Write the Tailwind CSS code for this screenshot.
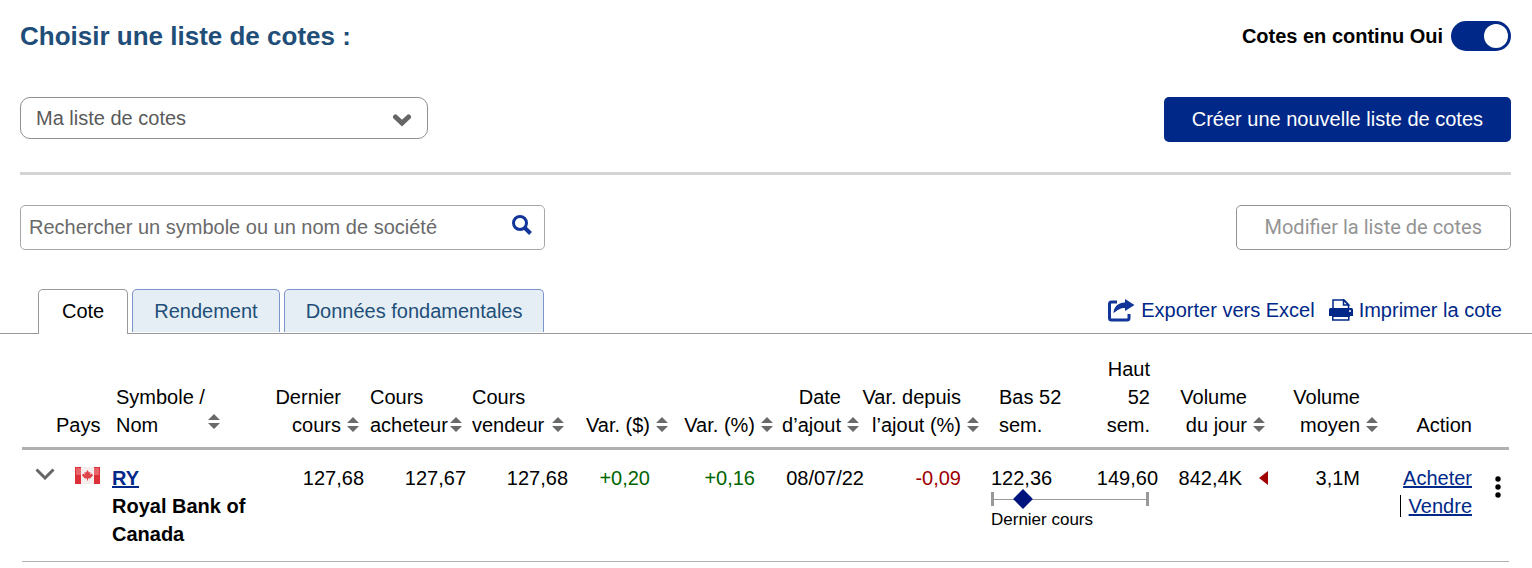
<!DOCTYPE html>
<html lang="fr">

<head>
    <meta charset="UTF-8">
    <meta name="viewport" content="width=device-width, initial-scale=1.0">
    <title>Listes de cotes</title>
    <script src="https://cdn.jsdelivr.net/npm/@tailwindcss/browser@4"></script>
</head>

<body class="bg-white text-black text-[20px] leading-7 font-['Liberation_Sans',Arial,sans-serif]">

    <!-- Sort arrows, shared by the column headers -->
    <svg class="hidden">
        <symbol id="sort" viewBox="0 0 12 15">
            <path d="M6 0l6 6H0zM6 15l6-6H0z" fill="#6a6a6a" />
        </symbol>
    </svg>

    <!-- List selection -->
    <header class="ml-5 mr-[21px] pt-[21px] pb-[30px] border-b-3 border-[#d3d3d3]">
        <div class="flex justify-between items-center h-[30px]">
            <h1 class="text-[26px] font-bold text-[#1f4e79]"><label for="liste">Choisir une liste de cotes :</label></h1>
            <label class="flex items-center gap-2 font-bold">
                Cotes en continu Oui
                <input type="checkbox" role="switch" checked class="peer sr-only">
                <span class="flex justify-end w-[60px] h-[30px] p-[3px] rounded-full bg-[#002888]">
                    <span class="w-6 h-6 rounded-full bg-white"></span>
                </span>
            </label>
        </div>
        <div class="flex justify-between items-start mt-[46px]">
            <div class="relative w-[408px]">
                <select id="liste" class="appearance-none w-full h-[42px] pl-[15px] rounded-[10px] border border-[#8f8f8f] bg-white text-[#5a5a5a]">
                    <option>Ma liste de cotes</option>
                </select>
                <svg class="absolute right-4 top-4 w-[20px] h-[14px] pointer-events-none" viewBox="0 0 20 14">
                    <path d="M3.500 4l6.500 6 6.500-6" fill="none" stroke="#666" stroke-width="5" stroke-linecap="round" />
                </svg>
            </div>
            <button type="button" class="h-[45px] px-7 pb-[2px] rounded-[5px] bg-[#002888] text-white">Créer une nouvelle liste de cotes</button>
        </div>
    </header>

    <!-- Search -->
    <div class="flex justify-between ml-5 mr-[21px] mt-[30px]">
        <div class="relative w-[525px]">
            <input type="text" aria-label="Rechercher" placeholder="Rechercher un symbole ou un nom de société" class="w-full h-[45px] pl-2 pr-12 rounded-[5px] border border-[#a8a8a8] placeholder:text-[#6a6a6a]">
            <button type="button" aria-label="Lancer la recherche" class="absolute right-[13px] top-[10px]">
                <svg class="w-5 h-5" viewBox="0 0 20 20" fill="none" stroke="#12359a">
                    <circle cx="8" cy="8" r="6.500" stroke-width="3" />
                    <path d="M13 13l5.500 5.500" stroke-width="4" />
                </svg>
            </button>
        </div>
        <button type="button" disabled class="h-[45px] px-7 pb-[2px] rounded-[5px] border border-[#949494] text-[#949494] font-[Roboto,sans-serif]">Modifier la liste de cotes</button>
    </div>

    <!-- Tabs and exports -->
    <div class="flex justify-between items-end mt-[39px] border-b border-[#999] pl-[38px] pr-[30px]">
        <div class="flex items-start gap-1" role="tablist">
            <button type="button" role="tab" aria-selected="true" class="h-[45px] -mb-px px-[23px] pb-[3px] rounded-t-[5px] border border-b-0 border-[#999] bg-white">Cote</button>
            <button type="button" role="tab" class="h-[43px] px-[21px] rounded-t-[5px] border border-b-0 border-[#7c93cb] bg-[#e5eef4] text-[#1f4e79]">Rendement</button>
            <button type="button" role="tab" class="h-[43px] px-[21px] rounded-t-[5px] border border-b-0 border-[#7c93cb] bg-[#e5eef4] text-[#1f4e79]">Données fondamentales</button>
        </div>
        <div class="flex gap-[14px] pb-[9px] text-[#002888]">
            <a href="#" class="flex items-center gap-[6px]">
                <svg class="w-7 h-6" viewBox="0 0 28 24">
                    <path d="M10 4H4.500Q2.500 4 2.500 6v14Q2.500 22 4.500 22H20q2 0 2-2v-4" fill="none" stroke="#12359a" stroke-width="3" />
                    <path d="M18 1l9.500 6L18 13v-3C13 10 11 12 6.500 15 7 9 10 5 18 4.500z" fill="#12359a" />
                </svg>
                Exporter vers Excel
            </a>
            <a href="#" class="flex items-center gap-[6px]">
                <svg class="w-6 h-[22px]" viewBox="0 0 24 22">
                    <path d="M4 10V1h11l4.500 4.500V10" fill="#fff" stroke="#002888" stroke-width="1.500" />
                    <path d="M14.500 1v5H19.500z" fill="#fff" stroke="#002888" stroke-width="1.500" />
                    <path d="M1.500 9h21q1.500 0 1.500 1.500V17H0v-6.500Q0 9 1.500 9z" fill="#002888" />
                    <circle cx="21" cy="12" r="1" fill="#fff" />
                    <path d="M3.750 16h16v5h-16z" fill="#fff" stroke="#002888" stroke-width="1.500" />
                    <path d="M3 14h18v4H3z" fill="#002888" />
                </svg>
                Imprimer la cote
            </a>
        </div>
    </div>

    <!-- Quotes -->
    <div class="ml-[22px] mr-[23px] mt-[21px]">
        <table class="w-full table-fixed">
            <colgroup>
                <col class="w-[34px]">
                <col class="w-[50px]">
                <col class="w-[150px]">
                <col class="w-[108px]">
                <col class="w-[102px]">
                <col class="w-[102px]">
                <col class="w-[100px]">
                <col class="w-[105px]">
                <col class="w-[91px]">
                <col class="w-[115px]">
                <col class="w-[91px]">
                <col class="w-[88px]">
                <col class="w-[112px]">
                <col class="w-[108px]">
                <col class="w-[102px]">
                <col class="w-[29px]">
            </colgroup>
            <thead>
                <tr class="border-b-3 border-[#b0b0b0] align-bottom [&>th]:font-normal [&>th]:pb-2 [&>th]:whitespace-nowrap [&_button]:flex [&_button]:items-end [&_button]:w-full [&_svg]:shrink-0 [&_svg]:w-3 [&_svg]:h-[15px] [&_svg]:mb-[7px]">
                    <th></th>
                    <th class="text-left">Pays</th>
                    <th><button type="button" class="justify-between text-left pl-[10px] pr-9"><span>Symbole /<br>Nom</span><span class="pb-[3px]"><svg><use href="#sort" /></svg></span></button></th>
                    <th><button type="button" class="justify-end gap-[6px] text-right pr-[5px]"><span>Dernier<br>cours</span><svg><use href="#sort" /></svg></button></th>
                    <th><button type="button" class="justify-between text-left pl-[6px] pr-1"><span>Cours<br>acheteur</span><svg><use href="#sort" /></svg></button></th>
                    <th><button type="button" class="justify-between text-left pl-[6px] pr-1"><span>Cours<br>vendeur</span><svg><use href="#sort" /></svg></button></th>
                    <th><button type="button" class="justify-end gap-[6px] text-right">Var. ($) <svg><use href="#sort" /></svg></button></th>
                    <th><button type="button" class="justify-end gap-[6px] text-right">Var. (%) <svg><use href="#sort" /></svg></button></th>
                    <th><button type="button" class="justify-end gap-[6px] text-right pr-[5px]"><span>Date<br>d’ajout</span><svg><use href="#sort" /></svg></button></th>
                    <th><button type="button" class="justify-end gap-[6px] text-right"><span>Var. depuis<br>l’ajout (%)</span><svg><use href="#sort" /></svg></button></th>
                    <th class="text-left pl-5">Bas 52<br>sem.</th>
                    <th class="text-right pr-2">Haut<br>52<br>sem.</th>
                    <th><button type="button" class="justify-end gap-[6px] text-right pr-[5px]"><span>Volume<br>du jour</span><svg><use href="#sort" /></svg></button></th>
                    <th><button type="button" class="justify-end gap-[6px] text-right"><span>Volume<br>moyen</span><svg><use href="#sort" /></svg></button></th>
                    <th class="text-right pr-2">Action</th>
                    <th></th>
                </tr>
            </thead>
            <tbody>
                <tr class="border-b border-[#b0b0b0] align-top [&>td]:pt-[14px] [&>td]:pb-[13px]">
                    <td class="pl-[13px]">
                        <button type="button" aria-label="Détails" class="block pt-1">
                            <svg class="w-5 h-3" viewBox="0 0 20 12"><path d="M1.500 1.500L10 10l8.500-8.500" fill="none" stroke="#666" stroke-width="3" /></svg>
                        </button>
                    </td>
                    <td>
                        <svg class="ml-[19px] mt-[3px] w-[25px] h-[17px]" viewBox="0 0 25 17" role="img" aria-label="Canada">
                            <path d="M0 0h25v17H0z" fill="#f6eeee" />
                            <path d="M0 0h6v17H0zM19 0h6v17h-6z" fill="#dc3038" />
                            <path d="M1 1h5v7H1zM19 1h5v7h-5z" fill="#e9646a" />
                            <path d="M12.500 3l1.500 2.500 1.500-.5-.3 2.500L17 6.500l1 2-3 3h-2v2h-1v-2h-2l-3-3 1-2 1.800 1L9.500 5l1.500.5z" fill="#e0454c" />
                        </svg>
                    </td>
                    <td class="pl-[6px] font-bold"><a href="#" class="text-[#002888] underline">RY</a><br>Royal Bank of Canada</td>
                    <td class="text-right">127,68</td>
                    <td class="text-right">127,67</td>
                    <td class="text-right">127,68</td>
                    <td class="text-right text-[#006400] pr-[18px]">+0,20</td>
                    <td class="text-right text-[#006400] pr-[18px]">+0,16</td>
                    <td class="text-right whitespace-nowrap">08/07/22</td>
                    <td class="text-right text-[#a00000] pr-[18px]">-0,09</td>
                    <td colspan="2" class="pl-3">
                        <div class="flex justify-between"><span>122,36</span><span>149,60</span></div>
                        <!-- 52-week range -->
                        <div class="relative flex items-center h-[14px] mr-[9px] border-x-3 border-[#999]">
                            <div class="w-full h-px bg-[#999]"></div>
                            <div class="absolute w-[14px] h-[14px] -ml-[7px] rotate-45 bg-[#00147d]" style="left: 19%"></div>
                        </div>
                        <div class="text-[17px]">Dernier cours</div>
                    </td>
                    <td>
                        <div class="flex justify-end items-center gap-[17px] pr-[2px]">
                            842,4K
                            <svg class="w-[9px] h-[14px]" viewBox="0 0 9 14"><path d="M0 7l9-7v14z" fill="#a00000" /></svg>
                        </div>
                    </td>
                    <td class="text-right pr-[18px]">3,1M</td>
                    <td class="text-right pr-2">
                        <a href="#" class="text-[#002888] underline">Acheter</a>
                        <div class="flex justify-end items-center gap-2">
                            <span class="w-px h-[22px] bg-black"></span>
                            <a href="#" class="text-[#002888] underline">Vendre</a>
                        </div>
                    </td>
                    <td>
                        <button type="button" aria-label="Plus d’options" class="block pl-[15px] pt-3">
                            <svg class="w-[6px] h-[22px]" viewBox="0 0 6 22"><circle cx="3" cy="3" r="2.700" /><circle cx="3" cy="11" r="2.700" /><circle cx="3" cy="19" r="2.700" /></svg>
                        </button>
                    </td>
                </tr>
            </tbody>
        </table>
    </div>

</body>

</html>
